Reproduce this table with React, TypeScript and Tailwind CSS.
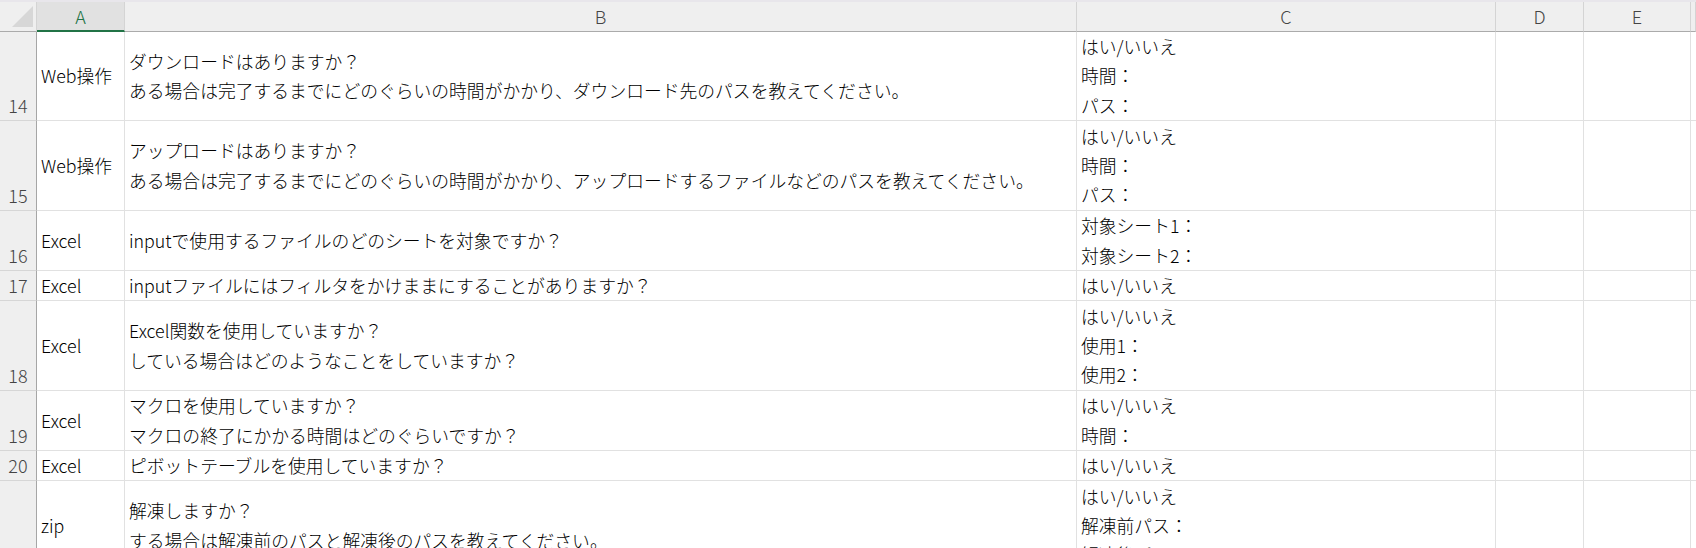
import React from "react";

type Row = {
  num: number;
  height: string;
  a: string;
  b: string[];
  c: string[];
};

const GRID = "grid grid-cols-[37px_88px_952px_419px_88px_107px_1fr]";

const rows: Row[] = [
  {
    num: 14,
    height: "h-[89px]",
    a: "Web操作",
    b: [
      "ダウンロードはありますか？",
      "ある場合は完了するまでにどのぐらいの時間がかかり、ダウンロード先のパスを教えてください。",
    ],
    c: ["はい/いいえ", "時間：", "パス："],
  },
  {
    num: 15,
    height: "h-[90px]",
    a: "Web操作",
    b: [
      "アップロードはありますか？",
      "ある場合は完了するまでにどのぐらいの時間がかかり、アップロードするファイルなどのパスを教えてください。",
    ],
    c: ["はい/いいえ", "時間：", "パス："],
  },
  {
    num: 16,
    height: "h-[60px]",
    a: "Excel",
    b: ["inputで使用するファイルのどのシートを対象ですか？"],
    c: ["対象シート1：", "対象シート2："],
  },
  {
    num: 17,
    height: "h-[30px]",
    a: "Excel",
    b: ["inputファイルにはフィルタをかけままにすることがありますか？"],
    c: ["はい/いいえ"],
  },
  {
    num: 18,
    height: "h-[90px]",
    a: "Excel",
    b: ["Excel関数を使用していますか？", "している場合はどのようなことをしていますか？"],
    c: ["はい/いいえ", "使用1：", "使用2："],
  },
  {
    num: 19,
    height: "h-[60px]",
    a: "Excel",
    b: ["マクロを使用していますか？", "マクロの終了にかかる時間はどのぐらいですか？"],
    c: ["はい/いいえ", "時間："],
  },
  {
    num: 20,
    height: "h-[30px]",
    a: "Excel",
    b: ["ピボットテーブルを使用していますか？"],
    c: ["はい/いいえ"],
  },
  {
    num: 21,
    height: "h-[90px]",
    a: "zip",
    b: ["解凍しますか？", "する場合は解凍前のパスと解凍後のパスを教えてください。"],
    c: ["はい/いいえ", "解凍前パス：", "解凍後パス："],
  },
];

// plain worksheet cell: gridline on the right and bottom, 4px inset
const cell = "flex flex-col justify-center overflow-hidden whitespace-nowrap border-r border-b border-[#e1e1e1] px-1";

function Lines({ lines }: { lines: string[] }) {
  return (
    <>
      {lines.map((l, i) => (
        <div key={i} className="leading-[29.25px]">
          {l}
        </div>
      ))}
    </>
  );
}

function HeaderRow() {
  const letters = ["B", "C", "D", "E", ""];
  return (
    <div className={`${GRID} h-[30px] bg-[#efefef] text-[18px]`}>
      <div className="flex items-end justify-end border-r border-b border-r-[#d4d4d4] border-b-[#ababab] pr-[3px] pb-[4px]">
        <svg width="21" height="21" viewBox="0 0 21 21">
          <polygon points="21,0 21,21 0,21" fill="#d7d7d7" />
        </svg>
      </div>
      <div className="flex items-center justify-center border-r border-r-[#d4d4d4] border-b-2 border-b-[#217346] bg-[#e1e1e1] text-[#217346]">
        A
      </div>
      {letters.map((l, i) => (
        <div
          key={i}
          className="flex items-center justify-center border-r border-b border-r-[#d4d4d4] border-b-[#ababab] text-[#444444]"
        >
          {l}
        </div>
      ))}
    </div>
  );
}

function SheetRow({ row }: { row: Row }) {
  return (
    <div className={`${GRID} ${row.height}`}>
      <div className="flex items-end justify-center border-r border-b border-r-[#a6a6a6] border-b-[#d6d6d6] bg-[#efefef] text-[18px] text-[#444444]">
        <span className="leading-[29px]">{row.num}</span>
      </div>
      <div className={cell}>
        <Lines lines={[row.a]} />
      </div>
      <div className={cell}>
        <Lines lines={row.b} />
      </div>
      <div className={cell}>
        <Lines lines={row.c} />
      </div>
      <div className={cell} />
      <div className={cell} />
      <div className={cell} />
    </div>
  );
}

export default function App() {
  return (
    <div className="h-[548px] w-[1696px] overflow-hidden bg-white font-['Noto_Sans_CJK_JP','Noto_Sans',sans-serif] text-[17.8px] font-light text-black">
      <div className="h-[2px] bg-[#e8e6eb]" />
      <HeaderRow />
      {rows.map((r) => (
        <SheetRow key={r.num} row={r} />
      ))}
    </div>
  );
}
